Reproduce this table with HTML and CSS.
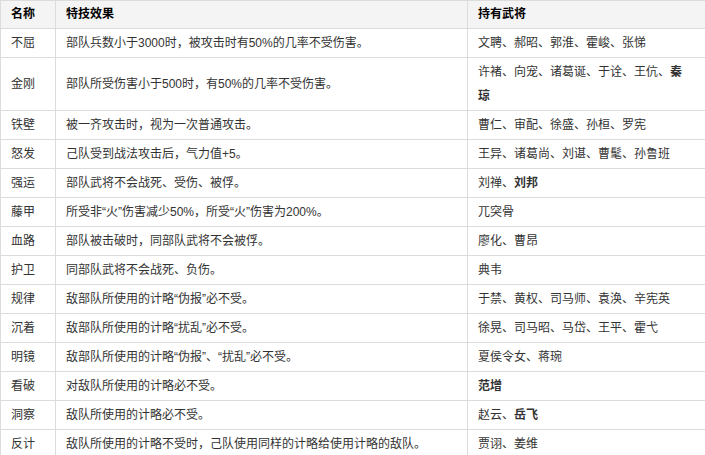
FILE: index.html
```html
<!DOCTYPE html>
<html lang="zh-CN">
<head>
<meta charset="utf-8">
<title>特技</title>
<link rel="stylesheet" href="styles.css">
</head>
<body>
<table class="skills">
  <colgroup>
    <col class="c-name">
    <col class="c-effect">
    <col class="c-owner">
  </colgroup>
  <thead>
    <tr><th>名称</th><th>特技效果</th><th>持有武将</th></tr>
  </thead>
  <tbody>
    <tr><td>不屈</td><td>部队兵数小于3000时，被攻击时有50%的几率不受伤害。</td><td>文聘、郝昭、郭淮、霍峻、张悌</td></tr>
    <tr><td>金刚</td><td>部队所受伤害小于500时，有50%的几率不受伤害。</td><td>许褚、向宠、诸葛诞、于诠、王伉、<b>秦琼</b></td></tr>
    <tr><td>铁壁</td><td>被一齐攻击时，视为一次普通攻击。</td><td>曹仁、审配、徐盛、孙桓、罗宪</td></tr>
    <tr><td>怒发</td><td>己队受到战法攻击后，气力值+5。</td><td>王异、诸葛尚、刘谌、曹髦、孙鲁班</td></tr>
    <tr><td>强运</td><td>部队武将不会战死、受伤、被俘。</td><td>刘禅、<b>刘邦</b></td></tr>
    <tr><td>藤甲</td><td>所受非“火”伤害减少50%，所受“火”伤害为200%。</td><td>兀突骨</td></tr>
    <tr><td>血路</td><td>部队被击破时，同部队武将不会被俘。</td><td>廖化、曹昂</td></tr>
    <tr><td>护卫</td><td>同部队武将不会战死、负伤。</td><td>典韦</td></tr>
    <tr><td>规律</td><td>敌部队所使用的计略“伪报”必不受。</td><td>于禁、黄权、司马师、袁涣、辛宪英</td></tr>
    <tr><td>沉着</td><td>敌部队所使用的计略“扰乱”必不受。</td><td>徐晃、司马昭、马岱、王平、霍弋</td></tr>
    <tr><td>明镜</td><td>敌部队所使用的计略“伪报”、“扰乱”必不受。</td><td>夏侯令女、蒋琬</td></tr>
    <tr><td>看破</td><td>对敌队所使用的计略必不受。</td><td><b>范增</b></td></tr>
    <tr><td>洞察</td><td>敌队所使用的计略必不受。</td><td>赵云、<b>岳飞</b></td></tr>
    <tr><td>反计</td><td>敌队所使用的计略不受时，己队使用同样的计略给使用计略的敌队。</td><td>贾诩、姜维</td></tr>
  </tbody>
</table>
</body>
</html>
```
FILE: styles.css
```css
html, body {
  margin: 0;
  padding: 0;
  background: #ffffff;
  overflow: hidden;
}

.skills {
  width: 705px;
  table-layout: fixed;
  border-collapse: collapse;
  font-family: "Liberation Sans", "Noto Sans CJK SC", sans-serif;
  font-size: 12px;
  line-height: 24px;
  color: #333333;
}

.c-name { width: 55px; }
.c-effect { width: 412px; }
.c-owner { width: 238px; }

.skills th,
.skills td {
  border: 1px solid #dcdcdc;
  padding: 2px 10px;
  text-align: left;
  vertical-align: middle;
}

.skills th {
  background: #f4f4f4;
  color: #000000;
  font-weight: bold;
  padding-top: 1px;
  padding-bottom: 2px;
}

.skills th:last-child,
.skills td:last-child {
  border-right: none;
  padding-right: 18px;
}

.skills b {
  font-weight: bold;
  color: #333333;
}
```
